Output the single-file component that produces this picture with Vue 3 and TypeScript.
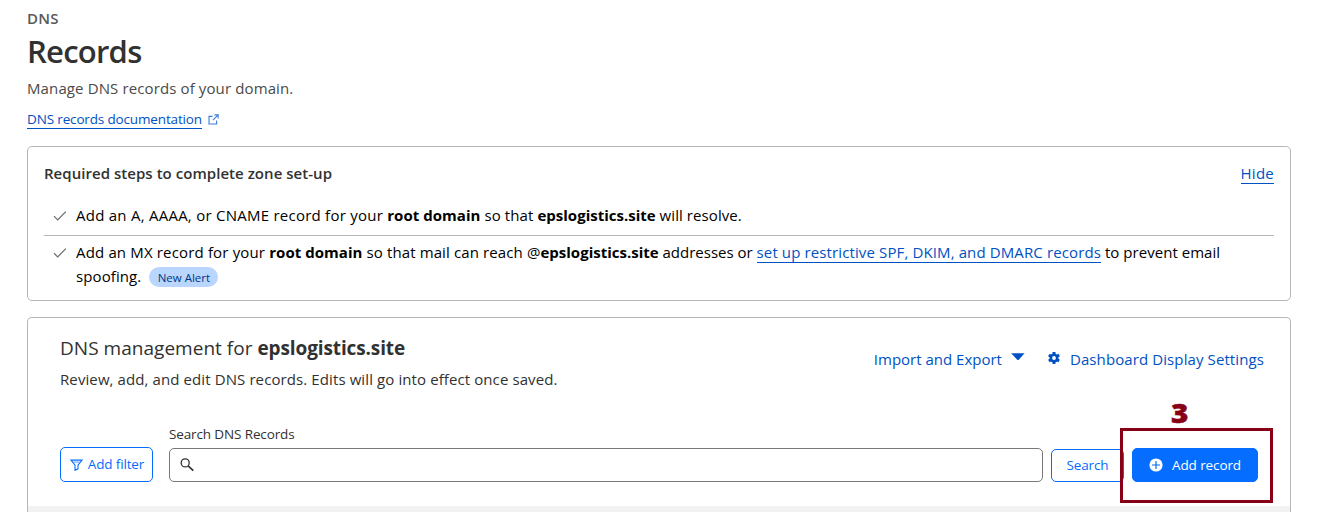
<script setup lang="ts">
import { ref } from 'vue'

const domain = 'epslogistics.site'
const query = ref('')
</script>

<template>
  <main class="page">
    <header class="intro">
      <div class="crumb"><span class="t-crumb">DNS</span></div>
      <h1><span class="t-title">Records</span></h1>
      <p class="lead"><span class="t-lead">Manage DNS records of your domain.</span></p>
      <div class="docs">
        <a class="link t-docs">DNS records documentation</a>
        <svg width="11" height="11" viewBox="0 0 12 12" fill="none" stroke="#3d7bd6" stroke-width="1.2">
          <path d="M5 2.6H1.1v8.3h8.3V7M7 .9h4.1V5M11 1 5.4 6.6" />
        </svg>
      </div>
    </header>

    <section class="panel steps">
      <div class="steps-head">
        <h2 class="t-steps">Required steps to complete zone set-up</h2>
        <a class="link hide">Hide</a>
      </div>
      <div class="step">
        <svg class="check" width="14" height="12" viewBox="0 0 14 12"><path d="M1 6.2 4.7 9.9 12.8 1.6" /></svg>
        <p><span class="s1">Add an A, AAAA, or CNAME record for your </span><b class="b1">root domain</b><span class="s2"> so that </span><b class="b2">{{ domain }}</b><span class="s3"> will resolve.</span></p>
      </div>
      <div class="step second">
        <svg class="check" width="14" height="12" viewBox="0 0 14 12"><path d="M1 6.2 4.7 9.9 12.8 1.6" /></svg>
        <p><span class="s4">Add an MX record for your </span><b class="b1">root domain</b><span class="s5"> so that mail can reach @</span><b class="b2">{{ domain }}</b><span class="s6"> addresses or </span><a class="link s7">set up restrictive SPF, DKIM, and DMARC records</a><span class="s8"> to prevent email </span><span class="s9">spoofing.</span><span class="alert">New Alert</span></p>
      </div>
    </section>

    <section class="panel manage">
      <div class="manage-head">
        <div>
          <h3><span class="t-dns">DNS management for </span><b class="t-dom">{{ domain }}</b></h3>
          <p class="review"><span class="t-review">Review, add, and edit DNS records. Edits will go into effect once saved.</span></p>
        </div>
        <div class="actions">
          <span class="t-import">Import and Export</span>
          <svg class="caret" width="14" height="8" viewBox="0 0 14 8"><path d="M.2.3h13.4L8 6.6q-1 1-2 0z" fill="#0051c3" /></svg>
          <svg class="gear" width="12" height="12" viewBox="0 0 12 12">
            <g fill="#0051c3">
              <rect x="4.5" y="0" width="3" height="12" rx=".4" />
              <rect x="4.5" y="0" width="3" height="12" rx=".4" transform="rotate(60 6 6)" />
              <rect x="4.5" y="0" width="3" height="12" rx=".4" transform="rotate(120 6 6)" />
              <circle cx="6" cy="6" r="4.5" />
            </g>
            <circle cx="6" cy="6" r="1.9" fill="#fff" />
          </svg>
          <span class="t-dash">Dashboard Display Settings</span>
        </div>
      </div>

      <div class="tools">
        <button class="btn filter">
          <svg width="13" height="12" viewBox="0 0 13 12" fill="none" stroke="#056dff" stroke-width="1.1"><path d="M1 1.1h11L8 6.2v3.6l-3 1.5V6.2z" /><path d="M3.4 3.1h6.2" stroke-width=".7" /></svg>
          <span class="t-filter">Add filter</span>
        </button>
        <div class="field">
          <label class="t-label" for="q">Search DNS Records</label>
          <div class="box">
            <svg width="14" height="14" viewBox="0 0 14 14" fill="none" stroke="#313131"><circle cx="5.2" cy="4.9" r="4" stroke-width="1.3" /><path d="m8.1 7.8 5.2 4.9" stroke-width="1.6" /></svg>
            <input id="q" v-model="query" type="text" />
          </div>
        </div>
        <button class="btn search"><span class="t-search">Search</span></button>
        <div class="add-wrap">
          <button class="btn add">
            <svg width="14" height="14" viewBox="0 0 14 14"><circle cx="7" cy="7" r="6.6" fill="#fff" /><path d="M7 3v8M3 7h8" stroke="#056dff" stroke-width="1.2" /></svg>
            <span class="t-add">Add record</span>
          </button>
          <div class="marker"></div>
          <div class="marker-label">3</div>
        </div>
      </div>
      <div class="table-head"></div>
    </section>
  </main>
</template>

<style>
body { background: #fff; }
</style>

<style scoped>
.page {
  box-sizing: border-box;
  width: 1319px;
  height: 517px;
  padding: 7px 28px 0 27px;
  overflow: hidden;
  background: #fff;
  color: #313131;
  font-family: "Open Sans", "Noto Sans", sans-serif;
  font-size: 15px;
}
h1, h2, h3, p { margin: 0; font-weight: 400; }
span, a, b, h2, label { white-space: pre-wrap; }
.link { color: #0051c3; border-bottom: 1px solid #0051c3; }
.intro { height: 139px; }
.crumb { height: 22px; line-height: 22px; font-weight: 600; color: #595959; }
.t-crumb { letter-spacing: .2px; }
h1 { height: 45px; line-height: 44px; font-size: 31px; font-weight: 600; }
.t-title { font-weight: 600; letter-spacing: -.75px; }
.lead { height: 28px; line-height: 28px; color: #4a4a4a; }
.t-lead { letter-spacing: .12px; }
.docs { display: flex; align-items: center; gap: 6px; height: 34px; font-size: 13.5px; }
.t-docs { height: 18px; line-height: 18px; letter-spacing: -.15px; }

.panel { box-sizing: border-box; width: 1264px; border: 1px solid #b6b6b6; border-radius: 5px; }
.steps { height: 155px; padding: 15px 16px 0; color: #000; }
.steps-head { display: flex; justify-content: space-between; height: 36px; }
.steps-head h2 { line-height: 22px; font-size: 15px; font-weight: 600; color: #313131; letter-spacing: .04px; }
.hide { height: 21px; line-height: 23px; letter-spacing: .25px; }
.step { display: flex; height: 38px; box-sizing: border-box; padding-left: 9px; border-bottom: 1px solid #b6b6b6; }
.step p { width: 1190px; line-height: 24px; padding-top: 5px; }
.step.second { height: 60px; border: 0; }
.step.second p { padding-top: 4px; }
.check { flex: none; margin: 12px 9px 0 0; fill: none; stroke: #6a6a6a; stroke-width: 1.2; }
.second .check { margin-top: 11px; }
.s1 { letter-spacing: .25px; }
.s2, .s9 { letter-spacing: .1px; }
.s3 { letter-spacing: .08px; }
.s4 { letter-spacing: .16px; }
.s5, .s7 { letter-spacing: .12px; }
.s8 { letter-spacing: .04px; }
.b1 { letter-spacing: .04px; }
.alert { display: inline-block; margin-left: 8px; width: 69px; height: 20px; border-radius: 10px; background: #b9d6ff; color: #003681; font-size: 11.5px; line-height: 21px; text-align: center; }

.manage { height: 195px; margin-top: 16px; border-bottom: 0; border-radius: 5px 5px 0 0; display: flex; flex-direction: column; }
.manage-head { display: flex; justify-content: space-between; height: 107px; padding: 16px 26px 0 32px; box-sizing: border-box; }
h3 { height: 30px; line-height: 29px; font-size: 19px; }
.t-dns { letter-spacing: .03px; }
.t-dom { letter-spacing: -.12px; }
.review { line-height: 30px; }
.t-review { letter-spacing: .1px; }
.actions { display: flex; align-items: center; height: 49px; color: #0051c3; }
.t-dash { letter-spacing: .1px; }
.caret { margin: -3px 23px 0 9px; }
.gear { margin: -2px 10px 0 0; }
.tools { display: flex; align-items: flex-end; height: 57px; padding-left: 32px; flex: none; }
.btn { display: flex; align-items: center; justify-content: center; box-sizing: border-box; margin: 0; padding: 0; border: 1px solid #056dff; border-radius: 5px; background: #fff; color: #056dff; font: 13.5px "Open Sans", "Noto Sans", sans-serif; }
.filter { width: 93px; height: 35px; padding-left: 1px; gap: 5px; letter-spacing: -.15px; }
.t-filter { margin-top: -2px; }
.field { width: 874px; margin: 0 8px 0 16px; }
.field label { display: block; height: 23px; line-height: 18px; font-size: 13.5px; letter-spacing: -.13px; }
.box { display: flex; align-items: center; box-sizing: border-box; height: 34px; padding-left: 10px; border: 1px solid #797979; border-radius: 5px; }
.box input { flex: 1; border: 0; outline: 0; background: transparent; font: inherit; }
.search { width: 73px; height: 33px; letter-spacing: -.15px; }
.t-search { margin-top: -2px; }
.add-wrap { position: relative; margin-left: 8px; }
.add { width: 126px; height: 34px; background: #056dff; color: #fff; gap: 9px; letter-spacing: -.1px; }
.marker { position: absolute; box-sizing: border-box; left: -12px; top: -20px; width: 153px; height: 75px; border: 3px solid #870016; }
.marker-label { position: absolute; left: 39px; top: -50px; font: 800 27px/30px "Open Sans", "Noto Sans", sans-serif; color: #870016; transform: scaleX(1.1); transform-origin: left; -webkit-text-stroke: .5px #870016; }
.table-head { margin-top: 24px; flex: 1; background: #f2f2f2; }
</style>
